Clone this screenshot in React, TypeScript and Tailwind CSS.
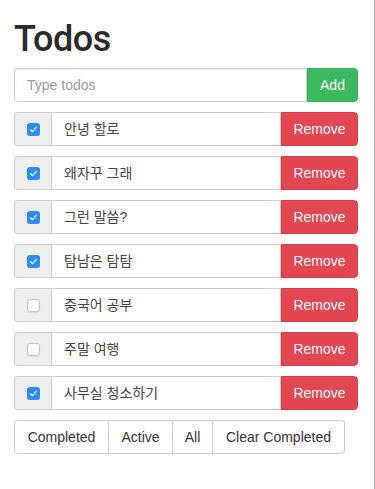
import React, { useState } from 'react';

type Todo = { id: number; text: string; done: boolean };

const INITIAL: Todo[] = [
  { id: 1, text: '안녕 할로', done: true },
  { id: 2, text: '왜자꾸 그래', done: true },
  { id: 3, text: '그런 말씀?', done: true },
  { id: 4, text: '탐남은 탐탐', done: true },
  { id: 5, text: '중국어 공부', done: false },
  { id: 6, text: '주말 여행', done: false },
  { id: 7, text: '사무실 청소하기', done: true },
];

const FILTERS = [
  { label: 'Completed', w: 'w-[95px]' },
  { label: 'Active', w: 'w-[64px]' },
  { label: 'All', w: 'w-[40px]' },
  { label: 'Clear Completed', w: 'w-[132px]' },
];

const FONT = "font-['Liberation_Sans','Noto_Sans_CJK_KR',sans-serif]";

function Check({ checked, onClick }: { checked: boolean; onClick: () => void }) {
  return (
    <button
      onClick={onClick}
      className={`w-[13px] h-[13px] rounded-[3px] flex items-center justify-center ${
        checked ? 'bg-[#2a8df5]' : 'bg-white border border-[#c4c4c4] shadow-[0_1px_1px_rgba(0,0,0,0.08)]'
      }`}
    >
      {checked && (
        <svg viewBox="0 0 12 12" className="w-[9px] h-[9px]">
          <path d="M2.2 6.4 L4.8 8.9 L9.8 3.2" fill="none" stroke="white" strokeWidth="1.7" strokeLinecap="round" strokeLinejoin="round" />
        </svg>
      )}
    </button>
  );
}

export default function App() {
  const [todos, setTodos] = useState<Todo[]>(INITIAL);
  const [draft, setDraft] = useState('');

  const toggle = (id: number) =>
    setTodos(todos.map(t => (t.id === id ? { ...t, done: !t.done } : t)));

  return (
    <div className={`w-[375px] min-h-[489px] bg-white border-r border-[#b9b9b9] pl-[14px] pr-[16px] pt-[19px] ${FONT}`}>
      <h1 className="h-[40px] leading-[40px] text-[36px] font-medium font-['Roboto',sans-serif] tracking-[-0.5px] text-[#2a2a2a] mb-[9px]">Todos</h1>

      {/* new todo input */}
      <div className="flex h-[34px]">
        <input
          value={draft}
          onChange={e => setDraft(e.target.value)}
          placeholder="Type todos"
          className="flex-1 min-w-0 border border-[#cccccc] rounded-l-[4px] px-3 text-[14px] text-[#555] placeholder:text-[#999] outline-none shadow-[inset_0_1px_1px_rgba(0,0,0,0.075)]"
        />
        <button className="w-[51px] bg-[#3cb85e] border border-[#37ad57] rounded-r-[4px] text-white text-[14px]">
          Add
        </button>
      </div>

      {/* todo list */}
      <div className="flex flex-col gap-[10px] mt-[10px]">
        {todos.map(t => (
          <div key={t.id} className="flex h-[34px]">
            <div className="w-[37px] bg-[#eeeeee] border border-r-0 border-[#cccccc] rounded-l-[4px] flex items-center justify-center">
              <Check checked={t.done} onClick={() => toggle(t.id)} />
            </div>
            <div className="flex-1 border border-[#cccccc] px-3 flex items-center text-[14px] text-[#444]">
              {t.text}
            </div>
            <button
              onClick={() => setTodos(todos.filter(x => x.id !== t.id))}
              className="w-[77px] bg-[#e34653] border border-[#d63e4b] rounded-r-[4px] text-white text-[14px]"
            >
              Remove
            </button>
          </div>
        ))}
      </div>

      {/* filters */}
      <div className="flex mt-[10px] h-[34px]">
        {FILTERS.map((f, i) => (
          <button
            key={f.label}
            className={`${f.w} bg-white border border-[#cccccc] text-[14px] text-[#333] ${i > 0 ? 'border-l-0' : 'rounded-l-[4px]'} ${
              i === FILTERS.length - 1 ? 'rounded-r-[4px]' : ''
            }`}
          >
            {f.label}
          </button>
        ))}
      </div>
    </div>
  );
}
